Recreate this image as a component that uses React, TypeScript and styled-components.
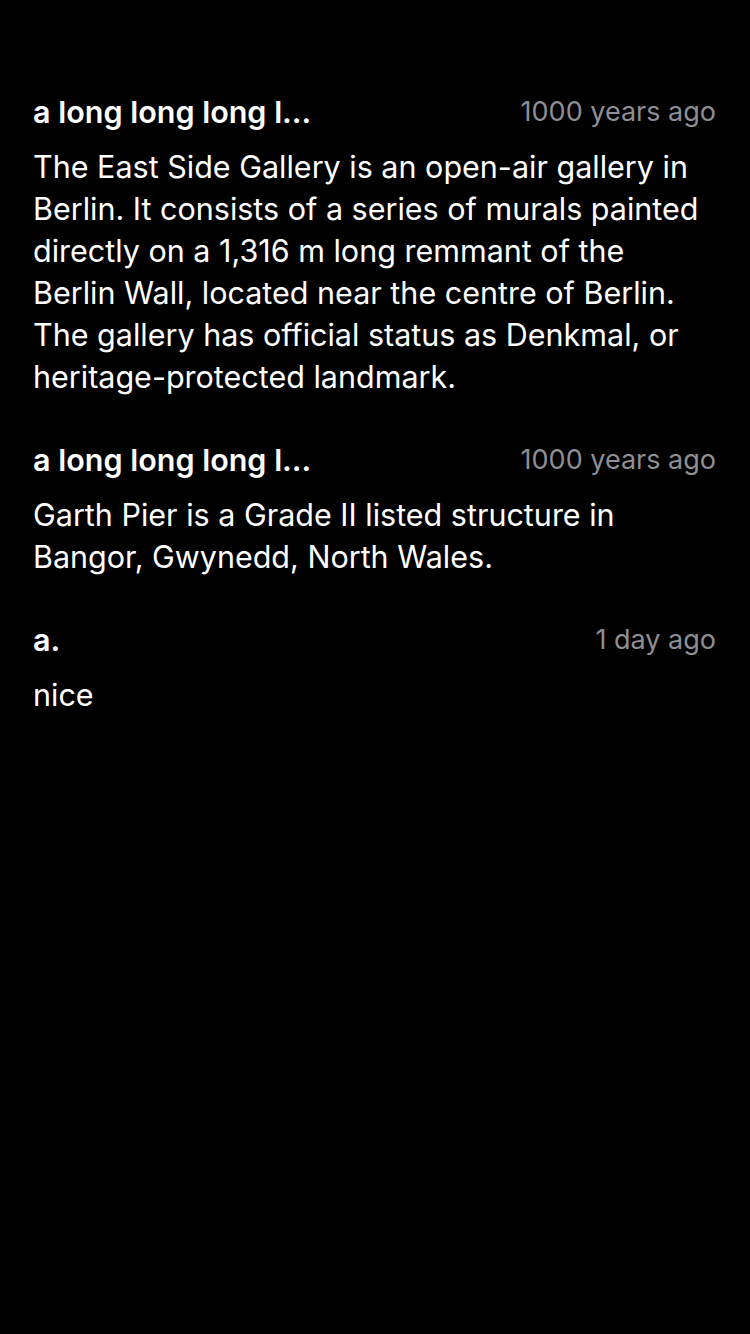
import React from "react";
import styled, { createGlobalStyle } from "styled-components";

const GlobalStyle = createGlobalStyle`
  html, body {
    margin: 0;
    padding: 0;
    background: #000;
  }
  body {
    font-family: Inter, "Noto Sans", "Liberation Sans", sans-serif;
    -webkit-font-smoothing: antialiased;
  }
`;

const Page = styled.div`
  min-height: 1334px;
  background: #000;
  padding: 92px 34px 0 33px;
  box-sizing: border-box;
  display: flex;
  flex-direction: column;
  gap: 42px;
`;

const Comment = styled.div`
  display: flex;
  flex-direction: column;
  gap: 14px;
`;

const Header = styled.div`
  display: flex;
  align-items: center;
  justify-content: space-between;
  height: 40px;
`;

const Author = styled.span`
  color: #fff;
  font-size: 30.5px;
  font-weight: 600;
  line-height: 40px;
  white-space: nowrap;
  overflow: hidden;
  text-overflow: ellipsis;
`;

const Time = styled.span`
  color: #8e8e93;
  font-size: 27px;
  line-height: 40px;
  white-space: nowrap;
`;

const Body = styled.p`
  margin: 0;
  padding-right: 12px;
  color: #fff;
  font-size: 30.5px;
  line-height: 42px;
`;

const comments = [
  {
    author: "a long long long l...",
    time: "1000 years ago",
    text: "The East Side Gallery is an open-air gallery in Berlin. It consists of a series of murals painted directly on a 1,316 m long remmant of the Berlin Wall, located near the centre of Berlin. The gallery has official status as Denkmal, or heritage-protected landmark.",
  },
  {
    author: "a long long long l...",
    time: "1000 years ago",
    text: "Garth Pier is a Grade II listed structure in Bangor, Gwynedd, North Wales.",
  },
  { author: "a.", time: "1 day ago", text: "nice" },
];

export default function App() {
  return (
    <>
      <GlobalStyle />
      <Page>
        {comments.map((c, i) => (
          <Comment key={i}>
            <Header>
              <Author>{c.author}</Author>
              <Time>{c.time}</Time>
            </Header>
            <Body>{c.text}</Body>
          </Comment>
        ))}
      </Page>
    </>
  );
}
